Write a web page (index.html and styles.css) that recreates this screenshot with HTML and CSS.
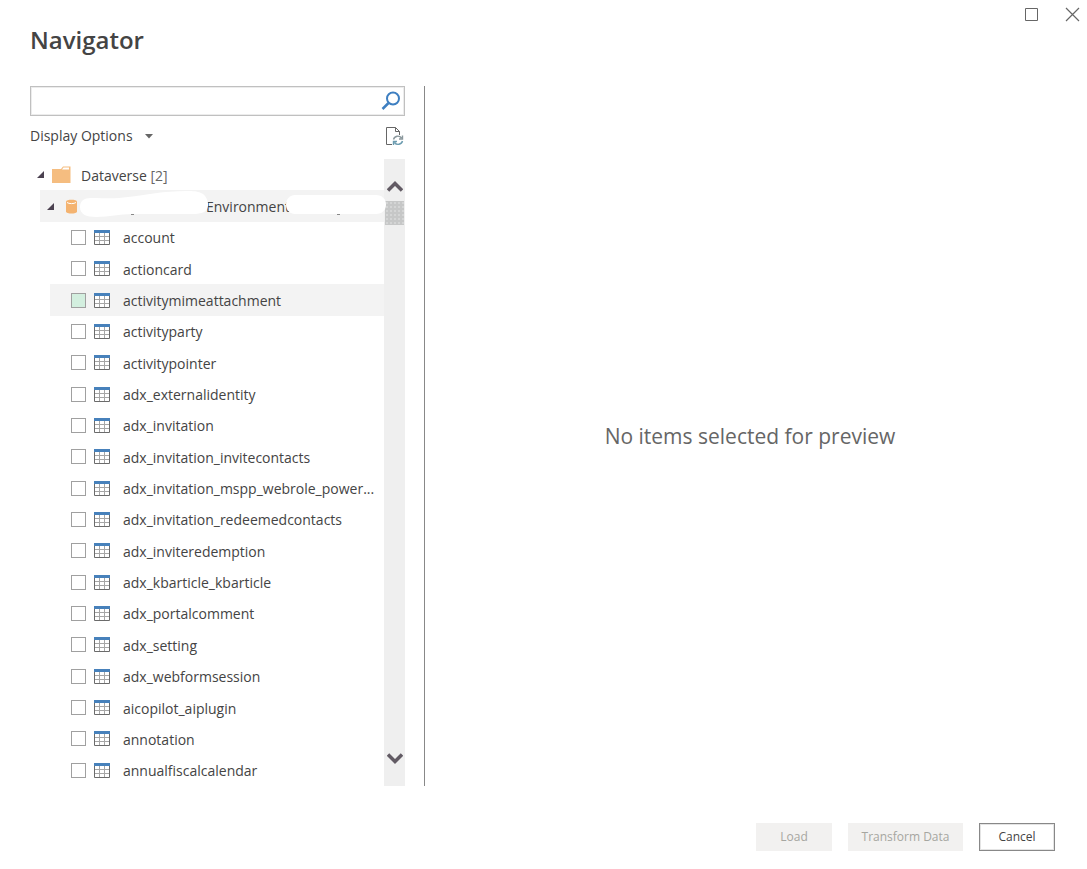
FILE: index.html
```
<!DOCTYPE html>
<html lang="en">
<head>
    <meta charset="UTF-8">
    <meta name="viewport" content="width=device-width, initial-scale=1.0">
    <title>Navigator</title>
    <link rel="stylesheet" href="styles.css">
</head>
<body>
    <svg class="sprite" aria-hidden="true">
        <symbol id="icon-table" viewBox="0 0 16 15">
            <path d="M.5 3v11.500h15V3" fill="#fff" stroke="#6b6b6b"/>
            <path d="M5.500 3v11M10.500 3v11M1 6.500h14M1 10.500h14" fill="none" stroke="#a6a6a6"/>
            <path d="M0 0h16v3H0z" fill="#4781bb"/>
        </symbol>
        <symbol id="icon-expanded" viewBox="0 0 7 7">
            <path d="M7 0v7H0z" fill="#4b4150"/>
        </symbol>
    </svg>

    <div class="window-buttons">
        <button aria-label="Maximize"><svg width="15" height="15"><path d="M1.500 1.500h12v12h-12z" fill="none" stroke="#666"/></svg></button>
        <button aria-label="Close"><svg width="15" height="15"><path d="M1 1l13 13M14 1L1 14" fill="none" stroke="#666" stroke-width="1.200"/></svg></button>
    </div>

    <h1>Navigator</h1>

    <main>
        <div class="sidebar">
            <div class="search">
                <input type="text" aria-label="Search">
                <button aria-label="Search">
                    <svg width="20" height="20"><circle cx="12" cy="7.500" r="6" fill="none" stroke="#3e7fc1" stroke-width="2"/><path d="M7.500 12L1.500 18" stroke="#3e7fc1" stroke-width="2.500"/></svg>
                </button>
            </div>
            <div class="toolbar">
                <button class="options">Display Options
                    <svg width="8" height="5"><path d="M0 0h8L4 4.500z" fill="#666"/></svg>
                </button>
                <button class="refresh" aria-label="Refresh">
                    <svg width="19" height="20">
                        <path d="M7 18.500H1.500v-17h9l4 4V9M10.500 1.500v4h4" fill="none" stroke="#666"/>
                        <path d="M8.500 13.500a4.500 4.500 0 0 1 8-1.500M17.500 9.500v3.500H14" fill="none" stroke="#8a979c" stroke-width="1.400"/>
                        <path d="M17.500 15a4.500 4.500 0 0 1-8 1.500M8.500 19v-3.500H12" fill="none" stroke="#6c9cb0" stroke-width="1.400"/>
                    </svg>
                </button>
            </div>
            <div class="tree-box">
                <div class="tree">
                    <div class="row root">
                        <svg class="arrow"><use href="#icon-expanded"/></svg>
                        <svg class="folder" width="19" height="17"><path d="M0 3h9l2-2.500h7.500V17H0z" fill="#f5bd80"/><path d="M10 3.500l1.500-2h5.500v2z" fill="#fff"/></svg>
                        <span>Dataverse <span class="count">[2]</span></span>
                    </div>
                    <div class="row env">
                        <svg class="arrow"><use href="#icon-expanded"/></svg>
                        <svg class="database" width="11" height="15"><path d="M0 2.500C0 .2 11 .2 11 2.500v10c0 2.800-11 2.800-11 0z" fill="#f4b370"/><path d="M1 3.500c2 1.500 7 1.500 9 0" fill="none" stroke="#fff"/></svg>
                        <span>Environment</span>
                        <svg class="cover" width="346" height="31">
                            <path d="M91 23.500h3M297 23.500h3" stroke="#888"/>
                            <path d="M40 17c0-6 4-9 11-9 16 0 24 1 37-1 18-2 35-6 59-6 11 0 19 1 21 12 1 9-6 11-16 11H92c-13 0-22 3-36 3-10 0-16-3-16-10z" fill="#fff"/>
                            <path d="M255 5h81c6 0 10 4 10 9.500s-4 9.500-10 9.500h-81c-5 0-9-4-9-9.500S250 5 255 5z" fill="#fff"/>
                            <path d="M91 24.500h3M297 24.500h3" stroke="#888"/>
                        </svg>
                    </div>
                    <label class="row"><input type="checkbox"><svg class="table"><use href="#icon-table"/></svg><span>account</span></label>
                    <label class="row"><input type="checkbox"><svg class="table"><use href="#icon-table"/></svg><span>actioncard</span></label>
                    <label class="row active"><input type="checkbox"><svg class="table"><use href="#icon-table"/></svg><span>activitymimeattachment</span></label>
                    <label class="row"><input type="checkbox"><svg class="table"><use href="#icon-table"/></svg><span>activityparty</span></label>
                    <label class="row"><input type="checkbox"><svg class="table"><use href="#icon-table"/></svg><span>activitypointer</span></label>
                    <label class="row"><input type="checkbox"><svg class="table"><use href="#icon-table"/></svg><span>adx_externalidentity</span></label>
                    <label class="row"><input type="checkbox"><svg class="table"><use href="#icon-table"/></svg><span>adx_invitation</span></label>
                    <label class="row"><input type="checkbox"><svg class="table"><use href="#icon-table"/></svg><span>adx_invitation_invitecontacts</span></label>
                    <label class="row"><input type="checkbox"><svg class="table"><use href="#icon-table"/></svg><span>adx_invitation_mspp_webrole_power...</span></label>
                    <label class="row"><input type="checkbox"><svg class="table"><use href="#icon-table"/></svg><span>adx_invitation_redeemedcontacts</span></label>
                    <label class="row"><input type="checkbox"><svg class="table"><use href="#icon-table"/></svg><span>adx_inviteredemption</span></label>
                    <label class="row"><input type="checkbox"><svg class="table"><use href="#icon-table"/></svg><span>adx_kbarticle_kbarticle</span></label>
                    <label class="row"><input type="checkbox"><svg class="table"><use href="#icon-table"/></svg><span>adx_portalcomment</span></label>
                    <label class="row"><input type="checkbox"><svg class="table"><use href="#icon-table"/></svg><span>adx_setting</span></label>
                    <label class="row"><input type="checkbox"><svg class="table"><use href="#icon-table"/></svg><span>adx_webformsession</span></label>
                    <label class="row"><input type="checkbox"><svg class="table"><use href="#icon-table"/></svg><span>aicopilot_aiplugin</span></label>
                    <label class="row"><input type="checkbox"><svg class="table"><use href="#icon-table"/></svg><span>annotation</span></label>
                    <label class="row"><input type="checkbox"><svg class="table"><use href="#icon-table"/></svg><span>annualfiscalcalendar</span></label>
                </div>
                <div class="scrollbar">
                    <button aria-label="Scroll up"><svg width="16" height="12"><path d="M1 10.500l7-7 7 7" fill="none" stroke="#625b64" stroke-width="3.500"/></svg></button>
                    <div class="thumb"></div>
                    <button class="down" aria-label="Scroll down"><svg width="16" height="12"><path d="M1 1.500l7 7 7-7" fill="none" stroke="#625b64" stroke-width="3.500"/></svg></button>
                </div>
            </div>
        </div>
        <div class="preview">
            <p>No items selected for preview</p>
        </div>
    </main>

    <footer>
        <button class="btn load" disabled>Load</button>
        <button class="btn transform" disabled>Transform Data</button>
        <button class="btn cancel">Cancel</button>
    </footer>
</body>
</html>
```
FILE: styles.css
```
* {
    margin: 0;
    padding: 0;
    box-sizing: border-box;
}
body {
    font-family: "Open Sans", "Noto Sans", sans-serif;
    font-size: 14px;
    line-height: 20px;
    color: #444;
    background-color: #fff;
    display: flex;
    flex-direction: column;
    height: 100vh;
    min-height: 600px;
}
button {
    font: inherit;
    color: inherit;
    background: none;
    border: none;
}
svg {
    display: block;
    flex-shrink: 0;
}
.sprite {
    position: absolute;
    width: 0;
    height: 0;
}
.window-buttons {
    display: flex;
    justify-content: flex-end;
    gap: 26px;
    height: 22px;
    padding: 7px 7px 0 0;
}
h1 {
    font-size: 24px;
    font-weight: 600;
    line-height: 36px;
    padding-left: 30px;
    margin-bottom: 28px;
}
main {
    display: flex;
    flex: 1;
    min-height: 0;
    padding: 0 12px 0 30px;
}
.sidebar {
    display: flex;
    flex-direction: column;
    width: 375px;
    flex-shrink: 0;
}
.search {
    display: flex;
    align-items: center;
    height: 30px;
    border: 1px solid #c0c0c0;
    box-shadow: inset 0 0 0 1px #ececec;
    padding: 1px;
}
.search input {
    flex: 1;
    height: 100%;
    padding: 0 6px;
    border: none;
    outline: none;
    font: inherit;
}
.search button {
    padding-right: 2px;
}
.toolbar {
    display: flex;
    justify-content: space-between;
    align-items: center;
    height: 43px;
    padding-bottom: 3px;
}
.options {
    display: flex;
    align-items: center;
    gap: 12px;
}
.refresh {
    padding-right: 1px;
}
.tree-box {
    display: flex;
    flex: 1;
    min-height: 0;
}
/* the rows share the height of the list */
.tree {
    display: flex;
    flex-direction: column;
    flex: 1;
    min-width: 0;
}
.row {
    display: flex;
    align-items: center;
    flex: 1;
    min-height: 0;
    margin-left: 20px;
    padding-left: 21px;
    white-space: nowrap;
}
.row > span {
    padding-top: 2px;
}
.row input {
    appearance: none;
    width: 15px;
    height: 15px;
    margin-right: 8px;
    border: 1px solid #a0a0a0;
    background-color: #fff;
}
.row.active,
.row.env {
    background-color: #f3f3f3;
}
.row.active input {
    background-color: #d3efdf;
}
.table {
    width: 16px;
    height: 15px;
    margin-right: 13px;
}
.arrow {
    width: 7px;
    height: 7px;
}
.row.root {
    margin-left: 0;
    padding-left: 7px;
}
.count {
    color: #666;
}
.folder {
    margin: 0 10px 0 8px;
}
.row.env {
    position: relative;
    margin-left: 10px;
    padding-left: 7px;
}
.database {
    margin: 0 129px 0 12px;
}
.cover {
    position: absolute;
    top: 0;
    left: 0;
}
.scrollbar {
    display: flex;
    flex-direction: column;
    align-items: center;
    width: 21px;
    padding: 21px 1px;
    background-color: #efefef;
}
.thumb {
    width: 100%;
    height: 24px;
    margin-top: 9px;
    background: radial-gradient(circle, #d4d5d5 1px, #c6c7c7 1px) 0 0 / 4px 4px;
}
.scrollbar .down {
    margin-top: auto;
}
.preview {
    display: flex;
    align-items: center;
    justify-content: center;
    flex: 1;
    margin-left: 19px;
    border-left: 1px solid #888;
    color: #666;
    font-size: 21px;
    line-height: 30px;
}
footer {
    display: flex;
    justify-content: flex-end;
    gap: 16px;
    padding: 37px 32px 18px;
}
.btn {
    height: 28px;
    font-size: 12px;
    background-color: #f2f1f0;
}
.btn:disabled {
    color: #a6a6a0;
}
.load {
    width: 76px;
}
.transform {
    width: 115px;
}
.cancel {
    width: 76px;
    border: 1px solid #888;
    box-shadow: inset 0 0 0 1px #e4e4e4;
    background-color: #fff;
}
```
